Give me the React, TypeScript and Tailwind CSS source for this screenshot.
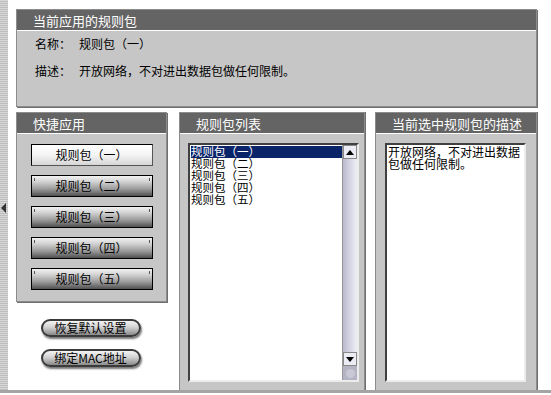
import React from 'react';

const packs = ['规则包（一）', '规则包（二）', '规则包（三）', '规则包（四）', '规则包（五）'];

function PanelHeader({ title }: { title: string }) {
  return (
    <div className="h-[21px] shrink-0 border-b border-white bg-[#646464] pl-[16px] text-[13px] leading-[21px] text-white">
      {title}
    </div>
  );
}

function QuickButton({ label, active }: { label: string; active?: boolean }) {
  if (active) {
    return (
      <div className="flex h-[22px] w-[122px] items-center justify-center border border-t-black border-l-black border-r-[#555] border-b-[#555] bg-[linear-gradient(180deg,#ffffff_0%,#f4f4f4_50%,#d6d6d6_100%)] text-[12px] leading-none">
        {label}
      </div>
    );
  }
  return (
    <div className="relative flex h-[22px] w-[122px] items-center justify-center border border-black bg-[linear-gradient(180deg,#f2f2f2_0%,#d0d0d0_30%,#9a9a9a_65%,#505050_100%)] text-[12px] leading-none">
      <span className="absolute left-[2px] top-[2px] h-[3px] w-px bg-[#555]" />
      <span className="absolute right-[2px] top-[2px] h-[3px] w-px bg-[#555]" />
      {label}
    </div>
  );
}

function RoundButton({ label }: { label: string }) {
  return (
    <div className="flex h-[18px] w-[100px] items-center justify-center rounded-full border-2 border-[#3a3a3a] bg-[linear-gradient(180deg,#f4f4f4_0%,#d2d2d2_45%,#8a8a8a_100%)] text-[12px] leading-none shadow-[1px_2px_2px_#777]">
      {label}
    </div>
  );
}

export default function App() {
  return (
    <div className="h-[395px] w-[551px] overflow-hidden bg-white font-['Noto_Sans_CJK_SC','Noto_Sans',sans-serif] text-[12px] text-black">
      <div className="flex h-[393px] border-b-[3px] border-[#a4a4a4]">
        {/* left edge strip */}
        <div className="relative w-[8px] shrink-0 bg-[repeating-linear-gradient(180deg,#d8d8d8_0px,#d8d8d8_1px,#bdbdbd_1px,#bdbdbd_2px)]">
          <div className="absolute left-[1px] top-[203px] h-0 w-0 border-y-[5px] border-r-[5px] border-y-transparent border-r-[#333]" />
        </div>

        <div className="flex flex-1 flex-col pl-[8px] pt-[9px]">
          {/* current rule pack */}
          <div className="flex h-[98px] w-[521px] flex-col border border-[#8c8c8c] bg-[#c6c6c6] shadow-[1px_1px_0_#707070]">
            <PanelHeader title="当前应用的规则包" />
            <div className="flex flex-col gap-[11px] pl-[18px] pt-[5px] text-[12px] leading-[16px]">
              <div className="flex">
                <span className="w-[44px]">名称：</span>
                <span>规则包（一）</span>
              </div>
              <div className="flex">
                <span className="w-[44px]">描述：</span>
                <span>开放网络，不对进出数据包做任何限制。</span>
              </div>
            </div>
          </div>

          <div className="mt-[5px] flex flex-1 gap-[12px]">
            {/* quick apply */}
            <div className="flex w-[151px] flex-col">
              <div className="flex h-[190px] flex-col border border-[#8c8c8c] bg-[#c6c6c6] shadow-[1px_1px_0_#707070]">
                <PanelHeader title="快捷应用" />
                <div className="flex flex-col items-center gap-[9px] pt-[10px]">
                  {packs.map((p, i) => (
                    <QuickButton key={p} label={p} active={i === 0} />
                  ))}
                </div>
              </div>
              <div className="mt-[17px] flex flex-col items-center gap-[12px] pr-[2px]">
                <RoundButton label="恢复默认设置" />
                <RoundButton label="绑定MAC地址" />
              </div>
            </div>

            {/* list */}
            <div className="flex w-[186px] flex-col border border-b-0 border-[#8c8c8c] bg-[#c6c6c6] shadow-[1px_0_0_#707070]">
              <PanelHeader title="规则包列表" />
              <div className="ml-[8px] mr-[5px] mt-[9px] mb-[8px] flex flex-1 border-2 border-t-[#404040] border-l-[#404040] border-r-[#ececec] border-b-[#ececec] bg-white">
                <div className="flex flex-1 flex-col pl-[1px] pt-[1px] font-['Liberation_Sans','Noto_Sans_CJK_SC',sans-serif] text-[11.5px] leading-[12px]">
                  {packs.map((p, i) => (
                    <div
                      key={p}
                      className={i === 0 ? 'h-[12px] bg-[#0a246a] text-white' : 'h-[12px] text-black'}
                    >
                      {p}
                    </div>
                  ))}
                </div>
                <div className="flex w-[15px] flex-col border-l border-[#999]">
                  <div className="flex h-[14px] items-center justify-center border border-[#888] bg-[#ececf4]">
                    <div className="h-0 w-0 border-x-[4px] border-b-[5px] border-x-transparent border-b-black" />
                  </div>
                  <div className="flex-1 bg-[linear-gradient(90deg,#b8b8cc_0%,#d6d6e4_50%,#eeeef6_100%)]" />
                  <div className="flex h-[14px] items-center justify-center border border-[#888] bg-[#ececf4]">
                    <div className="h-0 w-0 border-x-[4px] border-t-[5px] border-x-transparent border-t-black" />
                  </div>
                  <div className="flex h-[14px] items-center justify-center bg-[#b4b4c4]">
                    <div className="h-[9px] w-[9px] rounded-full bg-[#c8c8d6]" />
                  </div>
                </div>
              </div>
            </div>

            {/* description */}
            <div className="ml-[-2px] flex w-[162px] flex-col border border-b-0 border-[#8c8c8c] bg-[#c6c6c6] shadow-[1px_0_0_#707070]">
              <PanelHeader title="当前选中规则包的描述" />
              <div className="ml-[9px] mr-[10px] mt-[9px] mb-[8px] flex-1 border-2 border-t-[#404040] border-l-[#404040] border-r-[#ececec] border-b-[#ececec] bg-white pl-[1px] pt-[1px] text-[12px] leading-[12px]">
                开放网络，不对进出数据包做任何限制。
              </div>
            </div>
          </div>
        </div>
      </div>
    </div>
  );
}
